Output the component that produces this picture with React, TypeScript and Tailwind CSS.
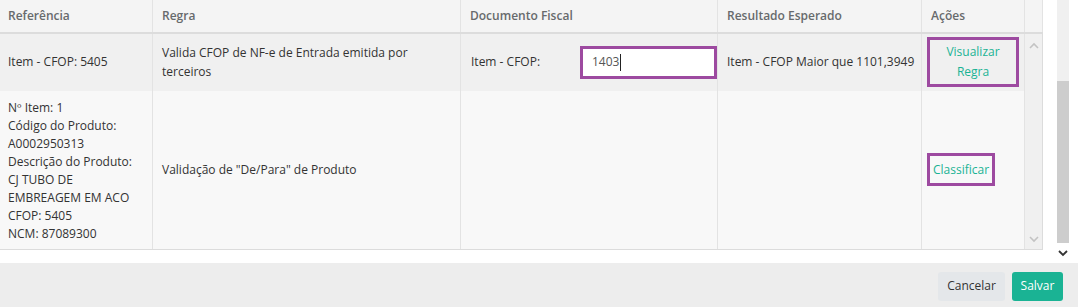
import React from 'react';

const cell = 'border-r border-[#e3e3e3] px-[9px]';

const App: React.FC = () => {
  return (
    <div className="w-[1078px] h-[307px] bg-white flex flex-col font-['Open_Sans',sans-serif] text-[12px] text-[#333]">
      <div className="flex h-[263px]">
        {/* Table */}
        <div className="w-[1043px] flex flex-col">
          {/* Header */}
          <div className="flex h-[34px] bg-[#f4f4f4] border-b-2 border-[#dcdcdc] font-semibold text-[#676a6c] items-stretch">
            <div className={`${cell} w-[153px] flex items-center pl-2`}>Referência</div>
            <div className={`${cell} w-[308px] flex items-center`}>Regra</div>
            <div className={`${cell} w-[257px] flex items-center`}>Documento Fiscal</div>
            <div className={`${cell} w-[204px] flex items-center`}>Resultado Esperado</div>
            <div className={`${cell} w-[103px] flex items-center`}>Ações</div>
            <div className="w-[18px] border-r border-[#e3e3e3]" />
          </div>

          {/* Body */}
          <div className="flex h-[216px] border-b border-[#dcdcdc]">
            <div className="w-[1025px] flex flex-col leading-[18px]">
              {/* Row 1 */}
              <div className="flex h-[57px] bg-[#f0f0f0]">
                <div className={`${cell} w-[153px] flex items-center pl-2`}>Item - CFOP: 5405</div>
                <div className={`${cell} w-[308px] flex items-center leading-[19px]`}>
                  Valida CFOP de NF-e de Entrada emitida por terceiros
                </div>
                <div className="border-r border-[#e3e3e3] pl-[10px] w-[257px] flex items-center">
                  <span className="w-[109px] shrink-0">Item - CFOP:</span>
                  <div className="flex-1 h-[33px] bg-white border-[3px] border-[#9d4aa0] flex items-center pl-[9px] text-[#555]">
                    1403<span className="inline-block w-px h-[17px] bg-[#222] ml-px" />
                  </div>
                </div>
                <div className="border-r border-[#e3e3e3] pl-[9px] w-[204px] flex items-center whitespace-nowrap overflow-hidden">
                  Item - CFOP Maior que 1101,3949
                </div>
                <div className="border-r border-[#e3e3e3] w-[103px] flex items-center pl-[5px]">
                  <div className="w-[92px] h-[50px] border-[3px] border-[#9d4aa0] flex items-center justify-center text-center text-[#1ab394] leading-[20px]">
                    Visualizar
                    <br />
                    Regra
                  </div>
                </div>
              </div>

              {/* Row 2 */}
              <div className="flex h-[159px] bg-[#f8f8f8]">
                <div className={`${cell} w-[153px] flex flex-col justify-center pl-2 pt-[3px]`}>
                  <div>Nº Item: 1</div>
                  <div>Código do Produto:</div>
                  <div>A0002950313</div>
                  <div>Descrição do Produto:</div>
                  <div>CJ TUBO DE</div>
                  <div>EMBREAGEM EM ACO</div>
                  <div>CFOP: 5405</div>
                  <div>NCM: 87089300</div>
                </div>
                <div className={`${cell} w-[308px] flex items-center`}>Validação de "De/Para" de Produto</div>
                <div className={`${cell} w-[257px]`} />
                <div className={`${cell} w-[204px]`} />
                <div className="border-r border-[#e3e3e3] w-[103px] flex items-center pl-[5px]">
                  <div className="h-[33px] border-[3px] border-[#9d4aa0] flex items-center px-[3px] text-[#1ab394]">
                    Classificar
                  </div>
                </div>
              </div>
            </div>

            {/* Inner scrollbar */}
            <div className="w-[18px] bg-[#f0f0f0] border-r border-[#dcdcdc] flex flex-col justify-between items-center py-[6px]">
              <svg width="10" height="8" viewBox="0 0 10 8" className="mt-[2px]">
                <path d="M1 6 L5 2 L9 6" fill="none" stroke="#c3c3c3" strokeWidth="1.6" />
              </svg>
              <svg width="10" height="8" viewBox="0 0 10 8">
                <path d="M1 2 L5 6 L9 2" fill="none" stroke="#c3c3c3" strokeWidth="1.6" />
              </svg>
            </div>
          </div>
        </div>

        {/* Page scrollbar */}
        <div className="w-[14px]" />
        <div className="w-[12px] flex flex-col">
          <div className="h-[81px] bg-[#f0f0f0]" />
          <div className="h-[162px] bg-[#cdcdcd]" />
          <div className="flex-1 flex items-center justify-center bg-white">
            <svg width="10" height="8" viewBox="0 0 10 8">
              <path d="M1 2 L5 6 L9 2" fill="none" stroke="#333" strokeWidth="1.8" />
            </svg>
          </div>
        </div>
        <div className="flex-1" />
      </div>

      {/* Footer */}
      <div className="flex-1 bg-[#ededed] flex items-center justify-end gap-[7px] pr-[15px] pt-[2px]">
        <button className="h-[29px] w-[67px] rounded-[3px] bg-[#e4e7ea] text-[#333] text-[12px]">Cancelar</button>
        <button className="h-[29px] w-[51px] rounded-[3px] bg-[#1ab394] text-white text-[12px]">Salvar</button>
      </div>
    </div>
  );
};

export default App;
